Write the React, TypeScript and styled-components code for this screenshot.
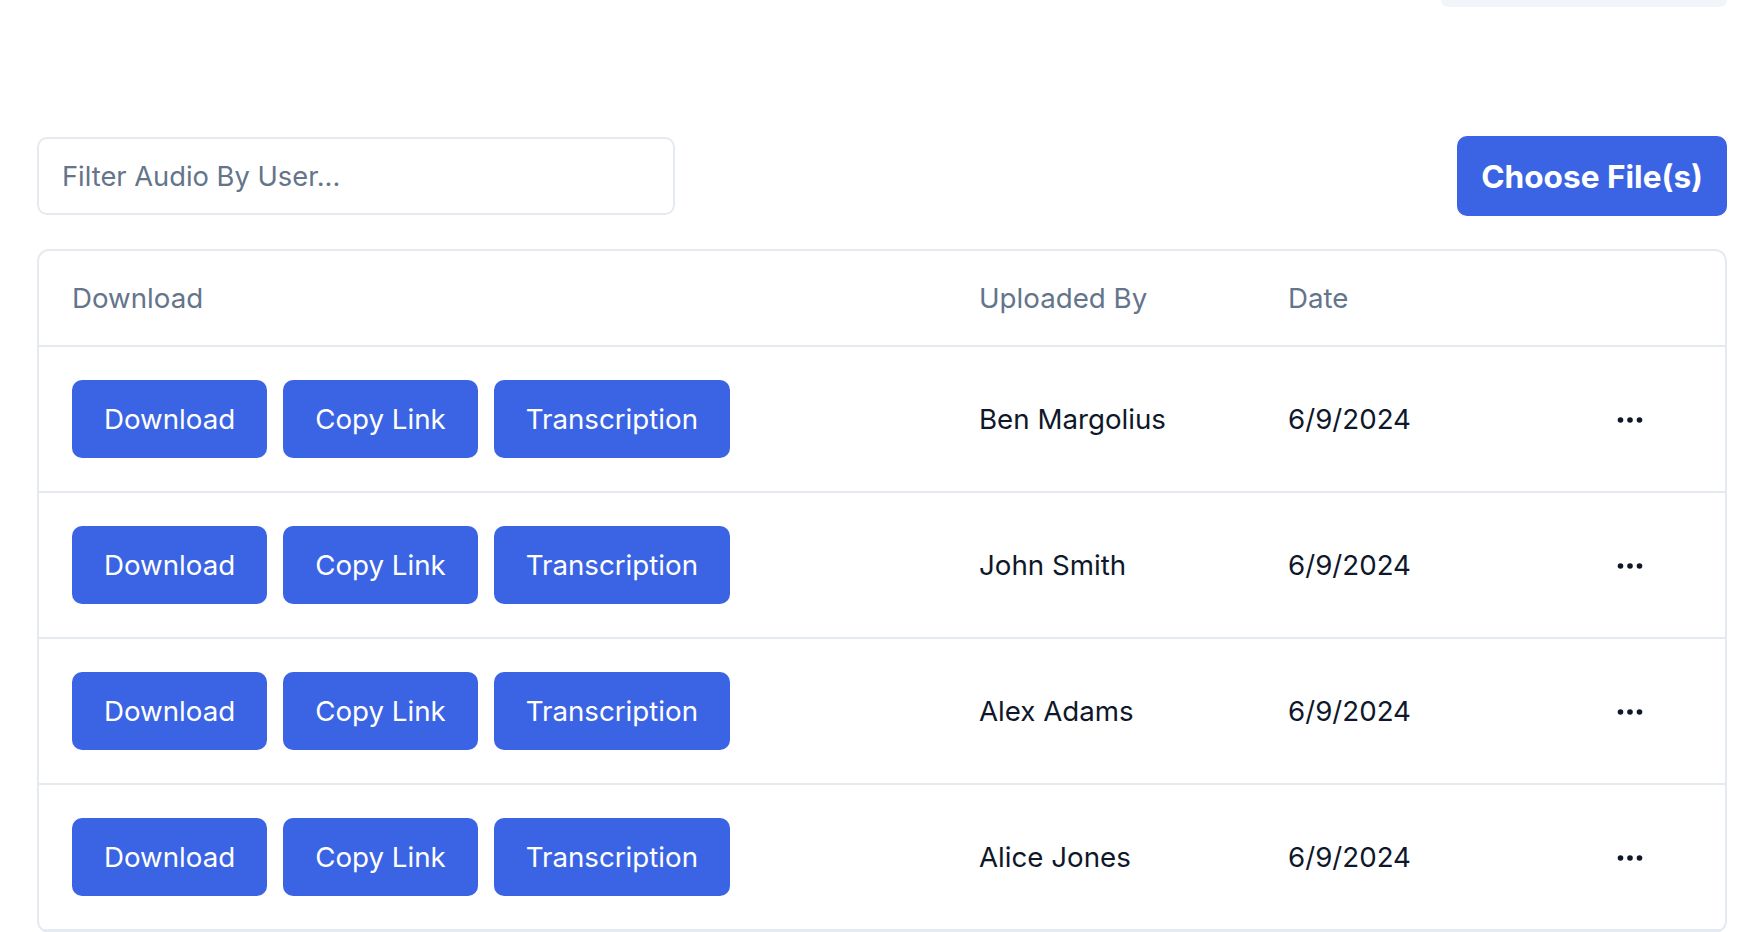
import React from "react";
import styled, { createGlobalStyle } from "styled-components";

const GlobalStyle = createGlobalStyle`
  html, body {
    margin: 0;
    padding: 0;
    background: #ffffff;
    font-family: Inter, "Noto Sans", "Liberation Sans", sans-serif;
    -webkit-font-smoothing: antialiased;
  }
  * { box-sizing: border-box; }
`;

const Page = styled.div`
  padding: 0 31px 0 37px;
  display: flex;
  flex-direction: column;
`;

const TopStrip = styled.div`
  display: flex;
  justify-content: flex-end;
  height: 130px;
`;

const TopPill = styled.div`
  width: 286px;
  height: 7px;
  background: #f1f5f9;
  border-radius: 0 0 10px 10px;
`;

const Toolbar = styled.div`
  display: flex;
  justify-content: space-between;
  align-items: center;
  height: 80px;
  margin-top: 6px;
`;

const FilterInput = styled.input`
  width: 638px;
  height: 78px;
  border: 2px solid #e5e9f0;
  border-radius: 10px;
  padding: 0 23px;
  font-family: inherit;
  font-size: 27.3px;
  color: #0f172a;
  outline: none;
  &::placeholder {
    color: #64748b;
  }
`;

const PrimaryButton = styled.button<{ $bold?: boolean }>`
  display: inline-flex;
  align-items: center;
  justify-content: center;
  height: ${(p) => (p.$bold ? 80 : 78)}px;
  padding: 0 ${(p) => (p.$bold ? 24 : 32)}px;
  border: none;
  border-radius: 10px;
  background: #3b64e4;
  color: #ffffff;
  font-family: inherit;
  font-size: ${(p) => (p.$bold ? 31.6 : 27.7)}px;
  font-weight: ${(p) => (p.$bold ? 700 : 400)};
  cursor: pointer;
  white-space: nowrap;
`;

const Card = styled.div`
  margin-top: 33px;
  border: 2px solid #e5e9f0;
  border-radius: 12px;
  overflow: hidden;
`;

const Row = styled.div<{ $header?: boolean }>`
  display: grid;
  grid-template-columns: 907px 309px 330px 1fr;
  align-items: center;
  height: ${(p) => (p.$header ? 96 : 146)}px;
  border-bottom: 2px solid #e5e9f0;
`;

const Cell = styled.div<{ $muted?: boolean }>`
  padding-left: 33px;
  font-size: 27.7px;
  color: ${(p) => (p.$muted ? "#64748b" : "#0f172a")};
  white-space: nowrap;
`;

const ButtonGroup = styled.div`
  display: flex;
  gap: 16px;
  padding-left: 33px;
`;

const MoreButton = styled.button`
  display: inline-flex;
  align-items: center;
  justify-content: center;
  margin-left: 32px;
  padding: 0;
  background: transparent;
  border: none;
  color: #0f172a;
  cursor: pointer;
`;

const MoreIcon = () => (
  <svg width="26" height="10" viewBox="0 0 26 10" fill="currentColor">
    <circle cx="3.5" cy="5" r="2.8" />
    <circle cx="13" cy="5" r="2.8" />
    <circle cx="22.5" cy="5" r="2.8" />
  </svg>
);

const rows = [
  { user: "Ben Margolius", date: "6/9/2024" },
  { user: "John Smith", date: "6/9/2024" },
  { user: "Alex Adams", date: "6/9/2024" },
  { user: "Alice Jones", date: "6/9/2024" },
];

export default function App() {
  return (
    <>
      <GlobalStyle />
      <Page>
        <TopStrip>
          <TopPill />
        </TopStrip>
        <Toolbar>
          <FilterInput placeholder="Filter Audio By User..." />
          <PrimaryButton $bold>Choose File(s)</PrimaryButton>
        </Toolbar>
        <Card>
          <Row $header>
            <Cell $muted>Download</Cell>
            <Cell $muted>Uploaded By</Cell>
            <Cell $muted>Date</Cell>
            <div />
          </Row>
          {rows.map((r) => (
            <Row key={r.user}>
              <ButtonGroup>
                <PrimaryButton>Download</PrimaryButton>
                <PrimaryButton>Copy Link</PrimaryButton>
                <PrimaryButton>Transcription</PrimaryButton>
              </ButtonGroup>
              <Cell>{r.user}</Cell>
              <Cell>{r.date}</Cell>
              <div>
                <MoreButton aria-label="More">
                  <MoreIcon />
                </MoreButton>
              </div>
            </Row>
          ))}
        </Card>
      </Page>
    </>
  );
}
